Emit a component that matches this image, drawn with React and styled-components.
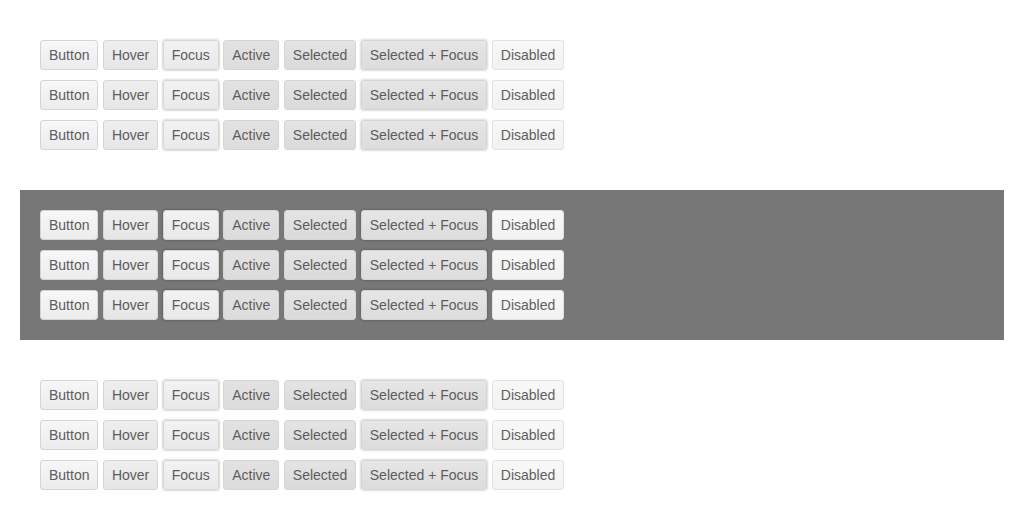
import React from "react";
import styled, { createGlobalStyle, css } from "styled-components";

const GlobalStyle = createGlobalStyle`
  html, body {
    margin: 0;
    padding: 0;
    background: #fff;
  }
  body {
    padding: 20px;
    font-family: "Liberation Sans", Arial, sans-serif;
  }
`;

const Page = styled.div`
  display: flex;
  flex-direction: column;
  row-gap: 20px;
`;

const Section = styled.section`
  display: flex;
  flex-direction: column;
  row-gap: 10px;
  padding: 20px;
  background: ${(p) => (p.$dark ? "#777777" : "transparent")};
`;

const Row = styled.div`
  display: flex;
  column-gap: 4.45px;
`;

const states = {
  normal: css`
    background: linear-gradient(#f7f7f7, #ececec);
  `,
  hover: css`
    background: linear-gradient(#eeeeee, #e6e6e6);
  `,
  focus: css`
    background: linear-gradient(#f2f2f2, #e9e9e9);
    box-shadow: 0 0 2px 1px rgba(0, 0, 0, 0.14);
  `,
  active: css`
    background: linear-gradient(#e2e2e2, #dcdcdc);
  `,
  selected: css`
    background: linear-gradient(#e4e4e4, #dadada);
  `,
  selectedFocus: css`
    background: linear-gradient(#e6e6e6, #dcdcdc);
    box-shadow: 0 0 2px 1px rgba(0, 0, 0, 0.14);
  `,
  disabled: css`
    background: linear-gradient(#f8f8f8, #f2f2f2);
    border-color: #e2e2e2;
    color: #606060;
  `,
};

const Button = styled.button`
  box-sizing: border-box;
  height: 30px;
  padding: 0 8px;
  border: 1px solid #d5d5d5;
  border-radius: 3px;
  font-family: "Liberation Sans", Arial, sans-serif;
  font-size: 14px;
  color: #5c5c5c;
  white-space: nowrap;
  cursor: pointer;
  ${(p) => states[p.$state]}
`;

const BUTTONS = [
  { label: "Button", state: "normal" },
  { label: "Hover", state: "hover" },
  { label: "Focus", state: "focus" },
  { label: "Active", state: "active" },
  { label: "Selected", state: "selected" },
  { label: "Selected + Focus", state: "selectedFocus" },
  { label: "Disabled", state: "disabled" },
];

const ButtonRow = () => (
  <Row>
    {BUTTONS.map((b) => (
      <Button key={b.label} $state={b.state} disabled={b.state === "disabled"}>
        {b.label}
      </Button>
    ))}
  </Row>
);

const ButtonSet = ({ dark }) => (
  <Section $dark={dark}>
    <ButtonRow />
    <ButtonRow />
    <ButtonRow />
  </Section>
);

export default function App() {
  return (
    <>
      <GlobalStyle />
      <Page>
        <ButtonSet />
        <ButtonSet dark />
        <ButtonSet />
      </Page>
    </>
  );
}
